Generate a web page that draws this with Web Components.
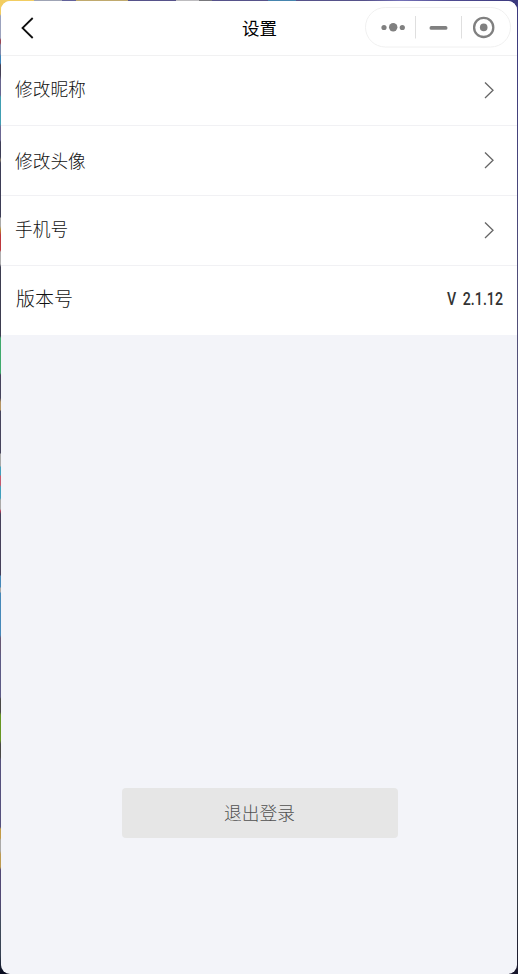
<!DOCTYPE html>
<html lang="zh-CN"><head><meta charset="utf-8"><title>设置</title>
<style>
html,body{margin:0;width:518px;height:974px;overflow:hidden}
body{font-family:"Noto Sans CJK SC",sans-serif;color:#333}
</style></head><body>
<app-window>
<title-bar>设置</title-bar>
<setting-row style="--shift:-3px">修改昵称</setting-row>
<setting-row style="--shift:-1px">修改头像</setting-row>
<setting-row style="--shift:-3px">手机号</setting-row>
<setting-row value="V 2.1.12" style="--size:19px;--inset:15px;--shift:-3px">版本号</setting-row>
<logout-button slot="footer">退出登录</logout-button>
</app-window>
<script>
function define(name, html, setup){
  customElements.define(name, class extends HTMLElement{
    constructor(){super();this.attachShadow({mode:'open'}).innerHTML=html;}
    connectedCallback(){if(setup)setup(this);}
  });
}
define('app-window', `<style>
:host{display:block;box-sizing:border-box;width:518px;height:974px;padding:1px 1px 0;
background:
linear-gradient(90deg,#f2cd61 0 34px,#9fa4b5 34px 62px,#62629a 62px 76px,#c0aa6e 76px 128px,#56528a 128px 176px,#bdbcbf 176px 199px,#77777b 199px 212px,#56528a 212px 268px,#4685ae 268px 296px,#56528a 296px 365px,#7572b8 400px,#504c92 450px,#3b397e) 0 0/518px 1px no-repeat,
linear-gradient(#f2cd61 0 14px,#9ba2bd 16px 38px,#9b4552 40px 43px,#8289aa 45px 54px,#3c83b9 56px 63px,#444055 65px 75px,#67658f 80px 95px,#409eb2 97px 124px,#6b6792 127px 140px,#3d3d56 142px 157px,#8a806d 160px,#3d3d56 163px 217px,#aaa 218px 226px,#b98b30 230px,#bd373d 235px 250px,#b0afb0 252px 264px,#3d3d50 267px 336px,#3fa96c 338px 373px,#45435c 375px 398px,#b59462 402px 410px,#45435c 411px 453px,#aaa9a8 454px 466px,#409fbd 467px 475px,#c7586d 476px 485px,#409fbd 487px 498px,#aaa9a8 500px 509px,#c03958 511px,#45405a 514px 575px,#4588b9 576px 587px,#aaa9a8 588px 592px,#4588b9 593px 635px,#665774 638px 650px,#5c5a85 656px 697px,#494846 699px 712px,#669522 715px 740px,#494846 744px 757px,#55507d 760px 827px,#c39b45 829px 838px,#aaa9a8 840px 851px,#bd9a50 854px 867px,#514875 870px 900px,#404b5b 925px,#354052 955px,#090c20 972px) 0 0/9px 974px no-repeat,
linear-gradient(#3b397e,#514f79 300px,#595778 600px,#333844 900px,#17152b) right top/9px 974px no-repeat,#100f22}
.pane{display:flex;flex-direction:column;height:973px;border-radius:9px;overflow:hidden;background:#f3f4f9}
footer{margin-top:auto;display:flex;justify-content:center;padding:0 0 136px 2px}
</style><div class="pane"><slot></slot><footer><slot name="footer"></slot></footer></div>`);
define('capsule-menu', `<style>
:host{display:block;width:146px;height:41px}svg{display:block}
</style><svg width="146" height="41" viewBox="0 0 146 41" fill="#808080">
<rect x=".5" y=".5" width="145" height="39.5" rx="19.75" fill="#fff" stroke="#f0f0f0"/>
<path d="M50.5 9v22.5M96.5 9v22.5" stroke="#dfdfdf"/>
<circle cx="19" cy="20.5" r="2.6"/><circle cx="28.2" cy="20.3" r="4.2"/><circle cx="37.3" cy="20.5" r="2.6"/>
<rect x="64.5" y="19" width="18" height="3.8" rx="1.9"/>
<circle cx="118.7" cy="20.4" r="9.6" fill="none" stroke="#808080" stroke-width="2.3"/><circle cx="118.7" cy="20.4" r="3.8"/>
</svg>`);
define('title-bar', `<style>
:host{display:grid;grid-template-columns:1fr auto 1fr;align-items:center;box-sizing:border-box;height:55px;flex:none;padding:0 6px 0 19px;background:#fff;border-bottom:1px solid #f1f1f2}
.title{font-size:17.5px;color:#000;line-height:26px;transform:translateX(-6px)}
.back{display:block;margin-bottom:1px}capsule-menu{justify-self:end;margin-bottom:2px}
</style><svg class="back" width="16" height="24" viewBox="0 0 16 24" fill="none" stroke="#111" stroke-width="1.8"><path d="M12.7 2 2.5 12l10.2 10"/></svg>
<div class="title"><slot></slot></div><capsule-menu></capsule-menu>`);
define('setting-row', `<style>
:host{display:flex;align-items:center;justify-content:space-between;box-sizing:border-box;height:70px;flex:none;padding:0 14px;background:#fff;border-bottom:1px solid #f1f1f4;color:#111;font-weight:300}
:host([value]){height:69px;border:0}
.label{font-size:var(--size,17.7px);line-height:28px;padding-left:calc(var(--inset,14px) - 14px);transform:translateY(var(--shift,0px))}
.value{font:500 18px/24px Roboto,sans-serif;color:#333;word-spacing:4px;transform:translateY(-2px) scaleX(.79);transform-origin:right}
svg{display:block;margin:0 8px 2px 0}
</style><span class="label"><slot></slot></span><span class="end"></span>`, el=>{
  const end=el.shadowRoot.querySelector('.end');
  if(el.hasAttribute('value')){end.className='value';end.textContent=el.getAttribute('value');}
  else end.innerHTML='<svg width="12" height="18" viewBox="0 0 12 18" fill="none" stroke="#666" stroke-width="1.3"><path d="M2 1.5 10 9.3 2 17"/></svg>';
});
define('logout-button', `<style>
:host{display:block}
button{display:block;width:276px;height:50px;border:0;border-radius:4px;padding:0 1px 2px 0;background:#e6e6e6;color:#505050;font:300 17.7px/48px "Noto Sans CJK SC",sans-serif}
</style><button><slot></slot></button>`);
</script>
</body></html>
